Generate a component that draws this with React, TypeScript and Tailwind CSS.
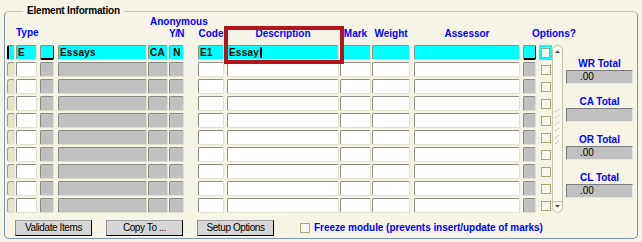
import React from 'react';

const cell = 'h-[15px] shrink-0 rounded-[2px] border text-[10px] font-bold leading-[13px] pl-[1px] overflow-hidden whitespace-nowrap text-black tracking-[0.2px]';
const white = 'bg-white border-t-[#8e8e85] border-l-[#8e8e85] border-r-[#e2e1cc] border-b-[#e2e1cc]';
const gray = 'bg-[#c0c0c0] border-t-[#8a8a84] border-l-[#8a8a84] border-r-[#deddc8] border-b-[#deddc8]';
const cyan = 'bg-[#00ffff] border-t-[#8e8e85] border-l-[#8e8e85] border-r-[#e2e1cc] border-b-[#e2e1cc]';
const cyanSunk = 'bg-[#00ffff] border-t-[#8e8e85] border-l-[#8e8e85] border-r-black border-b-2 border-b-black';

const Check = () => <div className="w-[10px] h-[10px] border border-[#a8a67c] bg-[#f7f7ee]" />;

const Row = ({ first }: { first?: boolean }) => {
  const a = first ? cyan : white;
  const b = first ? cyan : gray;
  return (
    <div className="flex h-[15px]">
      {first ? (
        <div className={`${cell} w-[8px] bg-[#00ffff] border-t-[#8e8e85] border-l-2 border-l-black border-r-[#e2e1cc] border-b-[#e2e1cc]`} />
      ) : (
        <div className={`${cell} w-[8px] bg-[#e3e2cc] border-t-[#9a9a90] border-l-[#9a9a90] border-r-[#e3e2cc] border-b-[#e3e2cc] rounded-l-[3px]`} />
      )}
      <div className={`${cell} ${a} ml-[1px] w-[21px]`}>{first ? 'E' : ''}</div>
      <div className={`${cell} ${first ? cyanSunk : gray} ml-[3px] w-[14px]`} />
      <div className={`${cell} ${b} ml-[4px] w-[89px]`}>{first ? 'Essays' : ''}</div>
      <div className={`${cell} ${b} ml-[1px] w-[20px]`}>{first ? 'CA' : ''}</div>
      <div className={`${cell} ${b} ml-[1px] w-[15px] text-center pl-0`}>{first ? 'N' : ''}</div>
      <div className={`${cell} ${a} ml-[14px] w-[26px]`}>{first ? 'E1' : ''}</div>
      <div className={`${cell} ${a} ml-[3px] w-[112px] flex items-center`}>
        {first && (
          <>
            <span>Essay</span>
            <span className="w-[2px] h-[11px] bg-black ml-[1px]" />
          </>
        )}
      </div>
      <div className={`${cell} ${a} ml-[1px] w-[31px]`} />
      <div className={`${cell} ${a} ml-[1px] w-[38px]`} />
      <div className={`${cell} ${a} ml-[4px] w-[106px]`} />
      <div className={`${cell} ${first ? cyanSunk : gray} ml-[3px] w-[13px]`} />
      <div
        className={`ml-[3px] w-[13px] h-[15px] shrink-0 flex items-center justify-center ${
          first ? 'border-2 border-[#00ffff]' : ''
        }`}
      >
        <Check />
      </div>
    </div>
  );
};

const Scrollbar = () => (
  <svg width="11" height="168" viewBox="0 0 11 168" className="shrink-0">
    <rect x="0.5" y="0.5" width="10" height="167" rx="5" fill="#f7f7ec" stroke="#c4c4b3" />
    <polygon points="3,8 5.5,5.5 8,8" fill="#454545" />
    <line x1="0.5" y1="156.5" x2="10.5" y2="156.5" stroke="#c4c4b3" />
    <polygon points="3,160 8,160 5.5,162.5" fill="#454545" />
    {[64, 70, 77, 83, 90, 96].map((y) => (
      <line key={y} x1="3" y1={y + 3} x2="7" y2={y} stroke="#a5a596" strokeDasharray="1 1" />
    ))}
  </svg>
);

const Total = ({ label, value }: { label: string; value: string }) => (
  <div className="flex flex-col">
    <div className="h-[12px] leading-[12px] text-center text-[10px] font-bold text-[#0000ff]">{label}</div>
    <div className="h-[14px] bg-[#c0c0c0] border border-t-[#7c7c7c] border-l-[#7c7c7c] border-r-[#e6e6e6] border-b-[#e6e6e6] pl-[13px] text-[10px] leading-[12px] text-black">
      {value}
    </div>
  </div>
);

const Button = ({ children }: { children: React.ReactNode }) => (
  <button className="w-[77px] h-[16px] bg-[#d6d6d6] border border-t-[#a0a0a0] border-l-[#8e8e8e] border-r-black border-b-black text-[10px] leading-[14px] tracking-[-0.4px] text-black">
    {children}
  </button>
);

export default function App() {
  return (
    <div className="relative w-[642px] h-[242px] overflow-hidden bg-[#f5f4e6] pt-[11px] pl-[4px] font-['Liberation_Sans',Arial,sans-serif]">
      <div className="relative w-[634px] h-[228px] rounded-[5px] border border-[#7d96ad] border-t-[#c9c9b9]">
        <span className="absolute left-[18px] top-[-7px] px-[4px] bg-[#f5f4e6] text-[10px] leading-[12px] font-bold tracking-[-0.2px] text-black">
          Element Information
        </span>

        <div className="pl-[2px]">
          {/* headers */}
          <div className="h-[29px] text-[10px] font-bold text-[#0000ff] leading-[12px]">
            <div className="mt-[4px] h-[12px] flex">
              <span className="ml-[143px]">Anonymous</span>
            </div>
            <div className="h-[12px] flex items-start whitespace-nowrap">
              <span className="ml-[9px] w-[21px] text-center -mt-[1px]">Type</span>
              <span className="ml-[132px] w-[15px] text-center tracking-[-0.6px]">Y/N</span>
              <span className="ml-[14px] w-[26px] text-center">Code</span>
              <span className="ml-[3px] w-[112px] text-center">Description</span>
              <span className="ml-[1px] w-[31px] text-center">Mark</span>
              <span className="ml-[1px] w-[38px] text-center">Weight</span>
              <span className="ml-[4px] w-[106px] text-center">Assessor</span>
              <span className="ml-[12px]">Options?</span>
            </div>
          </div>

          {/* body */}
          <div className="flex items-start">
            <div className="flex flex-col gap-[2px] w-[545px]">
              <Row first />
              {Array.from({ length: 9 }).map((_, i) => (
                <Row key={i} />
              ))}
            </div>
            <Scrollbar />
            <div className="ml-[3px] w-[67px] pt-[13px] flex flex-col gap-[12px]">
              <Total label="WR Total" value=".00" />
              <Total label="CA Total" value="" />
              <Total label="OR Total" value=".00" />
              <Total label="CL Total" value=".00" />
            </div>
          </div>

          {/* footer */}
          <div className="mt-[7px] ml-[8px] flex items-center gap-[14px]">
            <Button>Validate Items</Button>
            <Button>Copy To ...</Button>
            <Button>Setup Options</Button>
            <div className="ml-[12px] flex items-center gap-[4px]">
              <Check />
              <span className="text-[10px] font-bold leading-[12px] text-[#0000ff] tracking-[-0.05px]">
                Freeze module (prevents insert/update of marks)
              </span>
            </div>
          </div>
        </div>
      </div>

      <div className="absolute left-[224px] top-[26px] w-[120px] h-[38px] border-4 border-[#b2151b]" />
    </div>
  );
}
